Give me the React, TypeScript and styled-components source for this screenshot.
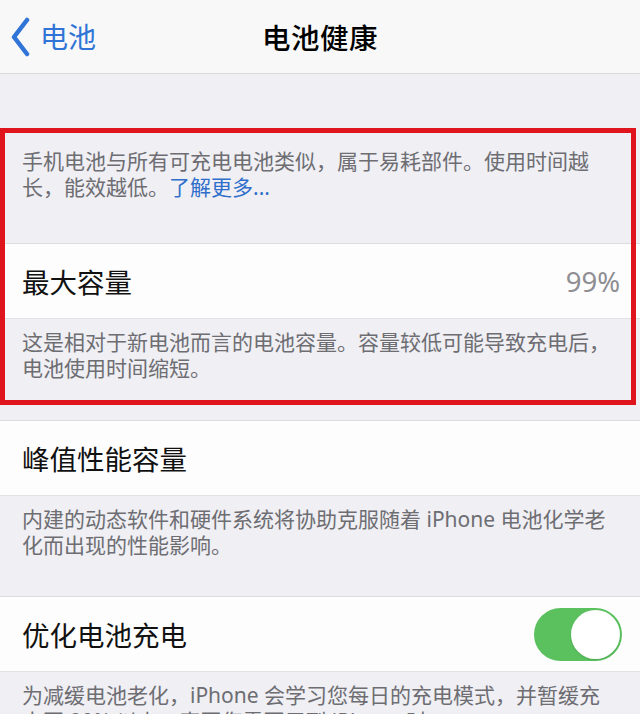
import React from "react"
import styled, { createGlobalStyle } from "styled-components"

const GlobalStyle = createGlobalStyle`
  html, body {
    margin: 0;
    padding: 0;
    background: #efeff4;
    font-family: "Noto Sans", "Noto Sans CJK SC", sans-serif;
    -webkit-font-smoothing: antialiased;
  }
  body {
    overflow: hidden;
  }
`

const Page = styled.div`
  width: 640px;
  min-height: 714px;
  background: #efeff4;
`

const NavBar = styled.header`
  height: 73px;
  display: grid;
  grid-template-columns: 1fr auto 1fr;
  align-items: center;
  background: #f8f8f8;
  border-bottom: 1px solid #d9d9dc;
`

const BackButton = styled.div`
  display: flex;
  align-items: center;
  gap: 8px;
  padding-left: 10px;
  color: #2f74d6;
  font-size: 28px;
  line-height: 1;
`

const NavTitle = styled.h1`
  margin: 0;
  font-size: 28.5px;
  font-weight: 500;
  color: #000;
  letter-spacing: 0.5px;
`

const Spacer = styled.div<{ $h: number }>`
  height: ${(p) => p.$h}px;
`

const Highlight = styled.section`
  position: relative;
`

const Outline = styled.span`
  position: absolute;
  top: 0;
  left: 0;
  right: 4px;
  bottom: 0;
  border: 5px solid #e0141c;
  pointer-events: none;
`

const Footnote = styled.p<{ $top?: number; $bottom?: number }>`
  margin: 0;
  padding: ${(p) => p.$top ?? 12}px 22px ${(p) => p.$bottom ?? 20}px 22px;
  font-size: 21px;
  line-height: 25.5px;
  color: #6d6d72;
`

const Link = styled.span`
  color: #2f6fcb;
`

const Row = styled.div`
  display: flex;
  align-items: center;
  justify-content: space-between;
  padding: 0 20px 0 22px;
  background: #fdfdfd;
  border-top: 1px solid #dcdce0;
  border-bottom: 1px solid #e2e2e6;
  box-sizing: content-box;
  height: 74px;
`

const RowLabel = styled.span`
  font-size: 27.5px;
  color: #111;
`

const RowValue = styled.span`
  font-size: 27.5px;
  color: #8e8e93;
`

const Toggle = styled.div<{ $on: boolean }>`
  width: 88px;
  height: 53px;
  border-radius: 27px;
  background: ${(p) => (p.$on ? "#5ac15e" : "#e5e5ea")};
  display: flex;
  align-items: center;
  justify-content: ${(p) => (p.$on ? "flex-end" : "flex-start")};
  padding: 2px;
  box-sizing: border-box;
  margin-right: -2px;
`

const Knob = styled.div`
  width: 49px;
  height: 49px;
  border-radius: 50%;
  background: #fff;
  box-shadow: 0 1px 2px rgba(0, 0, 0, 0.12);
`

const App: React.FC = () => {
  return (
    <Page>
      <GlobalStyle />
      <NavBar>
        <BackButton>
          <svg width="22" height="40" viewBox="0 0 22 40">
            <polyline
              points="17,3 4,20 17,37"
              fill="none"
              stroke="#2f74d6"
              strokeWidth="4.5"
              strokeLinecap="round"
              strokeLinejoin="round"
            />
          </svg>
          <span>电池</span>
        </BackButton>
        <NavTitle>电池健康</NavTitle>
        <div />
      </NavBar>

      <Spacer $h={54} />

      <Highlight>
        <Footnote $top={21} $bottom={43}>
          手机电池与所有可充电电池类似，属于易耗部件。使用时间越长，能效越低。
          <Link>了解更多...</Link>
        </Footnote>
        <Row>
          <RowLabel>最大容量</RowLabel>
          <RowValue>99%</RowValue>
        </Row>
        <Footnote $top={11} $bottom={24}>
          这是相对于新电池而言的电池容量。容量较低可能导致充电后，电池使用时间缩短。
        </Footnote>
        <Outline />
      </Highlight>

      <Spacer $h={15} />

      <Row>
        <RowLabel>峰值性能容量</RowLabel>
      </Row>
      <Footnote $top={11} $bottom={38}>
        内建的动态软件和硬件系统将协助克服随着 iPhone 电池化学老化而出现的性能影响。
      </Footnote>

      <Row>
        <RowLabel>优化电池充电</RowLabel>
        <Toggle $on={true}>
          <Knob />
        </Toggle>
      </Row>
      <Footnote $top={11} $bottom={20}>
        为减缓电池老化，iPhone 会学习您每日的充电模式，并暂缓充电至 80% 以上，直至您需要用到 iPhone 时。
      </Footnote>
    </Page>
  )
}

export default App
